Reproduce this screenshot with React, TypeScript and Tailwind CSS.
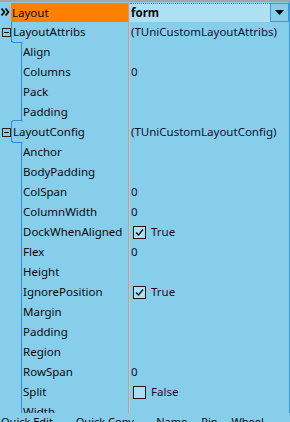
import React from "react";

type Prop = {
  name: string;
  value?: string;
  check?: boolean;
  child?: boolean;
  group?: boolean;
  first?: boolean;
  last?: boolean;
};

const props: Prop[] = [
  { name: "LayoutAttribs", value: "(TUniCustomLayoutAttribs)", group: true },
  { name: "Align", child: true, first: true },
  { name: "Columns", value: "0", child: true },
  { name: "Pack", child: true },
  { name: "Padding", child: true, last: true },
  { name: "LayoutConfig", value: "(TUniCustomLayoutConfig)", group: true },
  { name: "Anchor", child: true, first: true },
  { name: "BodyPadding", child: true },
  { name: "ColSpan", value: "0", child: true },
  { name: "ColumnWidth", value: "0", child: true },
  { name: "DockWhenAligned", value: "True", check: true, child: true },
  { name: "Flex", value: "0", child: true },
  { name: "Height", child: true },
  { name: "IgnorePosition", value: "True", check: true, child: true },
  { name: "Margin", child: true },
  { name: "Padding", child: true },
  { name: "Region", child: true },
  { name: "RowSpan", value: "0", child: true },
  { name: "Split", value: "False", check: false, child: true },
  { name: "Width", child: true },
];

function CheckBox({ on }: { on: boolean }) {
  return (
    <span className="w-[13px] h-[13px] border border-[#1a1a1a] bg-[#aee0f5] flex items-center justify-center">
      {on && (
        <svg width="9" height="9" viewBox="0 0 9 9">
          <path d="M1 4.5 L3.5 7 L8 1.5" fill="none" stroke="#111" strokeWidth="1.3" />
        </svg>
      )}
    </span>
  );
}

function Collapse() {
  return (
    <span className="w-[9px] h-[9px] border border-[#222] flex items-center justify-center">
      <span className="w-[5px] h-px bg-[#111]" />
    </span>
  );
}

function Row({ p }: { p: Prop }) {
  return (
    <div className="flex h-5 shrink-0">
      <div className="w-[11px] flex items-center justify-center pl-px">
        {p.group && <Collapse />}
      </div>
      <div className="w-[117px] flex">
        {p.child ? (
          <>
            <div className="w-[10px] relative">
              {p.first && (
                <span className="absolute left-0 top-[-2px] w-[11px] h-[3px] border-l border-b border-[#2f8fd6] rounded-bl-[3px]" />
              )}
              {p.last && (
                <span className="absolute left-0 bottom-[-1px] w-[11px] h-[3px] border-l border-t border-[#2f8fd6] rounded-tl-[3px]" />
              )}
            </div>
            <div
              className={`flex-1 border-l border-[#2f8fd6] pl-px flex items-center ${
                p.first ? "rounded-tl-[3px]" : ""
              } ${p.last ? "rounded-bl-[3px]" : ""}`}
            >
              {p.name}
            </div>
          </>
        ) : (
          <div className="flex-1 border-l border-[#2f8fd6] pl-px flex items-center">{p.name}</div>
        )}
      </div>
      <div className="w-px bg-[#a8a8a8]" />
      <div className="w-px bg-[#c8c8c8]" />
      <div className="flex-1 flex items-center pl-px text-[#101030]">
        {p.check !== undefined ? (
          <span className="flex items-center gap-[5px] pl-[2px]">
            <CheckBox on={p.check} />
            <span className="text-[#2a0a2a]">{p.value}</span>
          </span>
        ) : (
          p.value
        )}
      </div>
    </div>
  );
}

export default function App() {
  return (
    <div
      className="w-[290px] h-[422px] bg-[#87ceeb] text-[11.5px] text-[#0a0a0a] overflow-hidden flex flex-col"
      style={{ fontFamily: '"Noto Sans", sans-serif' }}
    >
      <div className="h-[413px] shrink-0 overflow-hidden border-t-2 border-[#a6a6a6] border-r border-r-[#3a9ad9] flex flex-col">
        {/* selected row */}
        <div className="flex h-5 shrink-0">
          <div className="w-[11px] flex items-center justify-center">
            <svg width="9" height="8" viewBox="0 0 9 8">
              <path d="M0.5 0.5 L3.5 4 L0.5 7.5 M4.5 0.5 L7.5 4 L4.5 7.5" fill="none" stroke="#000" strokeWidth="1.6" />
            </svg>
          </div>
          <div className="w-[117px] bg-[#ff8000] flex items-center pl-[1px] mt-px">Layout</div>
          <div className="w-px bg-[#a8a8a8]" />
          <div className="w-px bg-[#c8c8c8]" />
          <div className="flex-1 flex mt-px">
            <div className="flex-1 bg-[#aee0f4] border-t border-dotted border-[#6a6a6a] flex items-center pl-px font-bold">
              form
            </div>
            <div className="w-[19px] border border-[#3a9ad9] flex items-center justify-center">
              <svg width="9" height="5" viewBox="0 0 9 5">
                <path d="M0 0 H9 L4.5 5 Z" fill="#000" />
              </svg>
            </div>
          </div>
        </div>
        {props.map((p, i) => (
          <Row key={i} p={p} />
        ))}
      </div>
      <div className="flex gap-[14px] pl-px leading-[14px] mt-[2px] text-[11px]">
        <span>Quick Edit...</span>
        <span>Quick Copy...</span>
        <span>Name</span>
        <span>Pin</span>
        <span>Wheel...</span>
      </div>
    </div>
  );
}
